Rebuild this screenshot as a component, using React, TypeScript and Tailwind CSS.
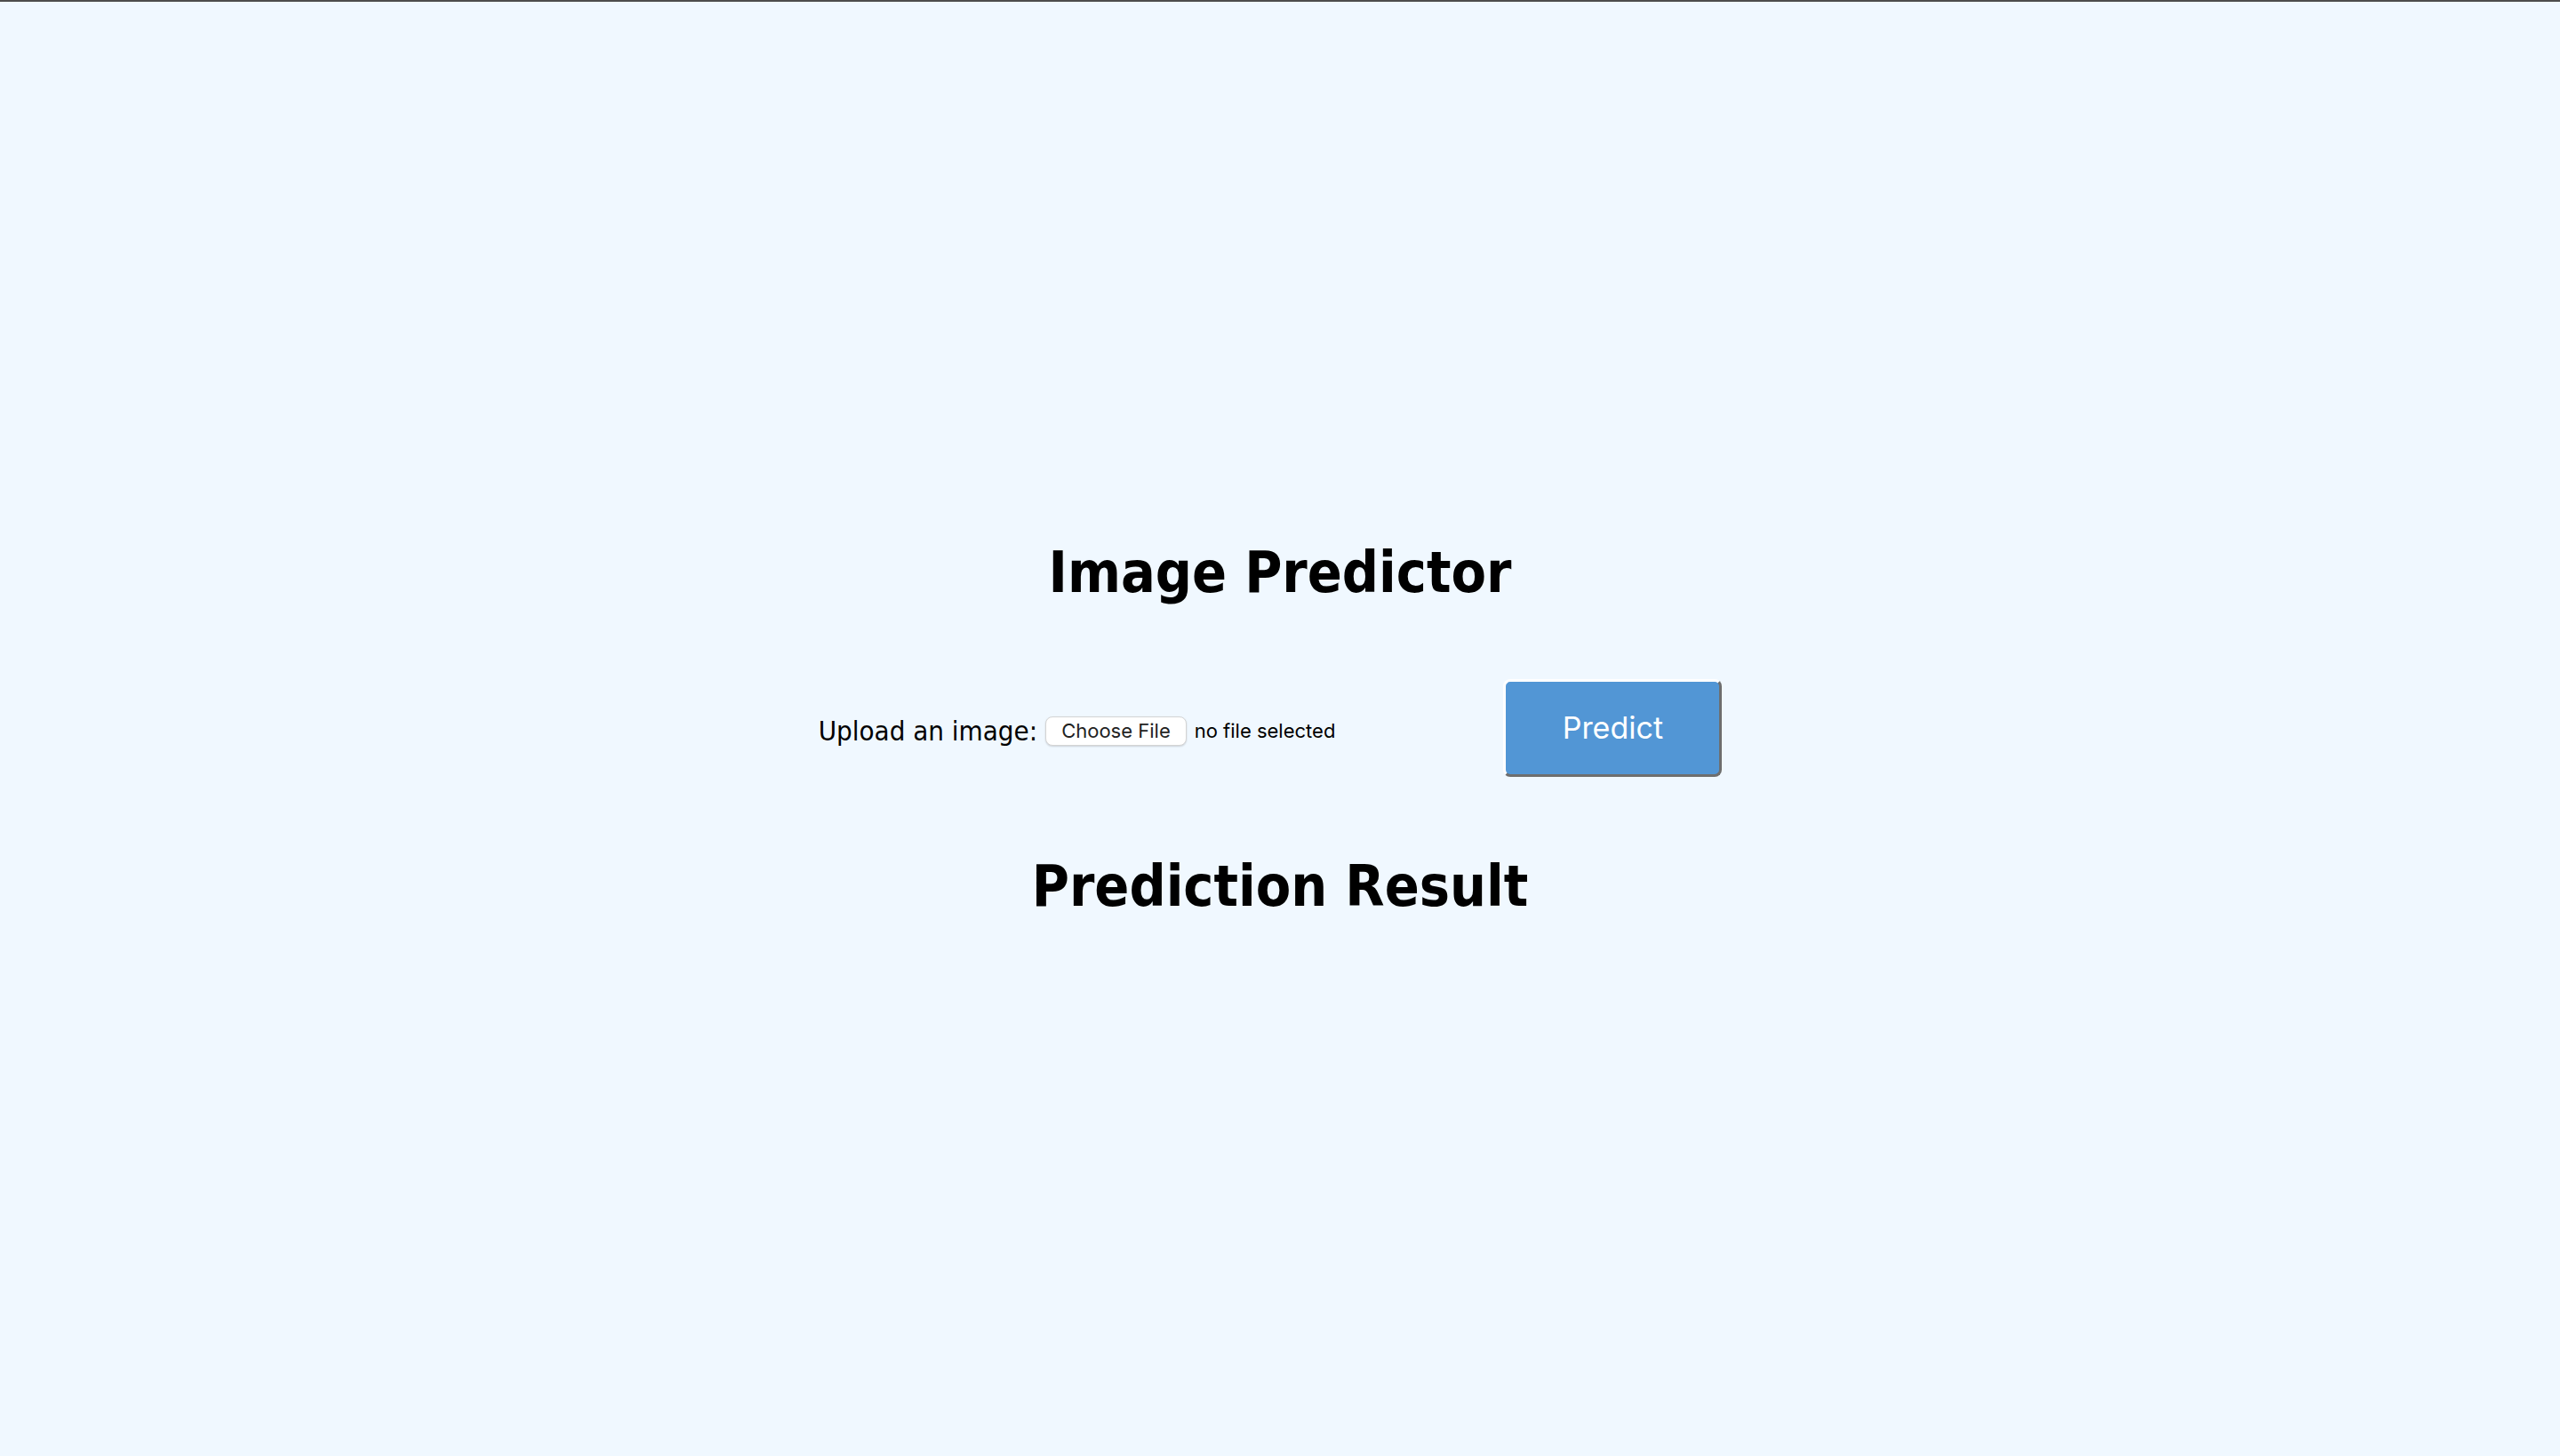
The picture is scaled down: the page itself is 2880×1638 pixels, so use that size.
export default function App() {
  return (
    <div className="min-h-screen bg-[#f0f8ff] border-t-2 border-[#4d4d4d] flex flex-col items-center justify-center">
      <h1 className="font-['DejaVu_Sans_Condensed','DejaVu_Sans',sans-serif] font-stretch-condensed font-bold text-[64px] leading-[74px] text-black">
        Image Predictor
      </h1>

      <form className="mt-[83px] flex items-center pr-[22px]" onSubmit={(e) => e.preventDefault()}>
        <label className="mt-[8px] font-['DejaVu_Sans_Condensed','DejaVu_Sans',sans-serif] font-stretch-condensed text-[31px] leading-none text-black">
          Upload an image:
        </label>
        <div className="mt-[8px] ml-[9px] flex items-center">
          <span className="h-[33px] px-[17px] flex items-center rounded-[8px] bg-white border border-[#d4d4d4] shadow-[0_1px_2px_rgba(0,0,0,0.15)] font-['Inter',sans-serif] text-[22px] text-[#222]">
            Choose File
          </span>
          <span className="ml-[9px] font-['Inter',sans-serif] text-[22px] text-black">no file selected</span>
        </div>
        <button
          type="submit"
          className="ml-[189px] w-[246px] h-[110px] rounded-[8px] bg-[#5296d5] border-[3px] border-t-white border-l-white border-b-[#6e6e6e] border-r-[#6e6e6e] font-['Inter',sans-serif] text-[34px] text-white"
        >
          Predict
        </button>
      </form>

      <h2 className="mt-[86px] font-['DejaVu_Sans_Condensed','DejaVu_Sans',sans-serif] font-stretch-condensed font-bold text-[64px] leading-[74px] text-black">
        Prediction Result
      </h2>
    </div>
  );
}
